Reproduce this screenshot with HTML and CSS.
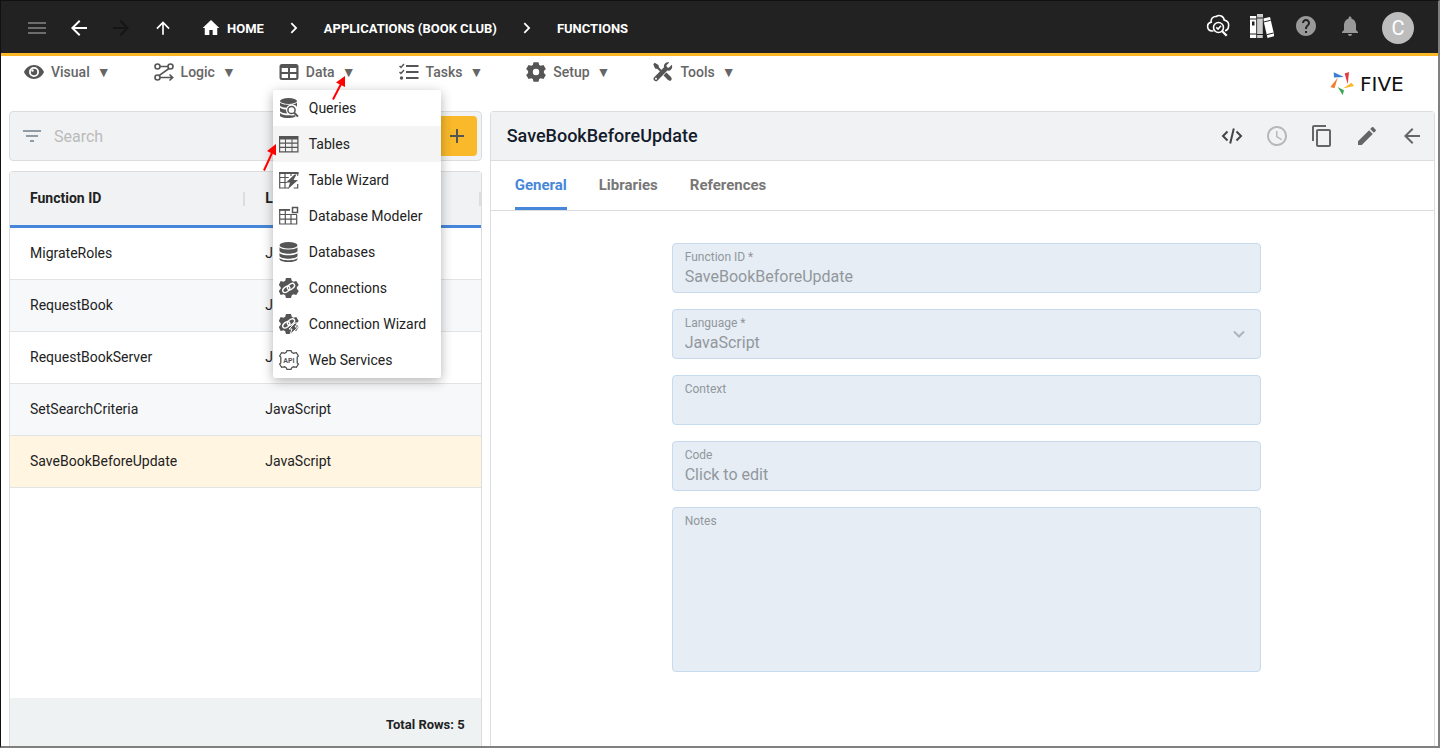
FILE: index.html
```html
<!DOCTYPE html>
<html lang="en">
<head>
    <meta charset="UTF-8">
    <meta name="viewport" content="width=device-width, initial-scale=1.0">
    <title>Five - Functions</title>
    <link rel="stylesheet" href="styles.css">
</head>
<body>
    <!-- Top Bar -->
    <header class="topbar">
        <div class="nav-buttons">
            <button type="button" class="icon-btn muted" aria-label="Menu">
                <svg width="24" height="24" viewBox="0 0 24 24"><path d="M3 6h18v2H3zM3 11h18v2H3zM3 16h18v2H3z"/></svg>
            </button>
            <button type="button" class="icon-btn" aria-label="Back">
                <svg width="24" height="24" viewBox="0 0 24 24"><path d="M20 11H7.830l5.590-5.590L12 4l-8 8 8 8 1.410-1.410L7.830 13H20z"/></svg>
            </button>
            <button type="button" class="icon-btn off" aria-label="Forward" disabled>
                <svg width="24" height="24" viewBox="0 0 24 24"><path d="M12 4l-1.410 1.410L16.170 11H4v2h12.170l-5.580 5.590L12 20l8-8z"/></svg>
            </button>
            <button type="button" class="icon-btn" aria-label="Up">
                <svg width="20" height="20" viewBox="0 0 24 24"><path d="M4 12l1.410 1.410L11 7.830V20h2V7.830l5.580 5.590L20 12l-8-8z"/></svg>
            </button>
        </div>
        <nav class="breadcrumb" aria-label="Breadcrumb">
            <a href="#" class="home">
                <svg width="20" height="20" viewBox="0 0 24 24"><path d="M10 20.500v-6h4v6h5.500v-8.500H22L12 2.500 2 12h2.500v8.500z"/></svg>
                HOME
            </a>
            <svg width="20" height="20" viewBox="0 0 24 24"><path d="M9.500 5.500L8 7l5 5-5 5 1.500 1.500L16 12z"/></svg>
            <a href="#">APPLICATIONS (BOOK CLUB)</a>
            <svg width="20" height="20" viewBox="0 0 24 24"><path d="M9.500 5.500L8 7l5 5-5 5 1.500 1.500L16 12z"/></svg>
            <a href="#">FUNCTIONS</a>
        </nav>
        <div class="topbar-tools">
            <button type="button" class="icon-btn" aria-label="Inspect cloud">
                <svg width="24" height="24" viewBox="0 0 24 24" fill="none" stroke="currentColor" stroke-width="1.600">
                    <path d="M7.500 17H6a4.500 4.500 0 0 1-.8-8.900 4.600 4.600 0 0 1 5-5.600 5 5 0 0 1 8 3.600A4.800 4.800 0 0 1 22.500 12a4.600 4.600 0 0 1-3.500 4.700"/>
                    <circle cx="12.500" cy="13.500" r="5"/>
                    <path d="M10.300 13.400l1.700 1.700 3-3.300"/><path d="M16.200 17.200l4.500 4.500" stroke-width="2.200"/>
                </svg>
            </button>
            <button type="button" class="icon-btn" aria-label="Library">
                <svg width="24" height="24" viewBox="0 0 24 24">
                    <path d="M0 2h6.500v22H0z"/><path d="M7 0h6v24H7z" fill="#ccc"/><path d="M13 4.500l7-1.500 4.500 19-7 2z"/>
                    <path d="M0 5h6.500M0 20h6.500M7 4h6M7 20.500h6M13.700 8l7-1.700M16.600 20.700l7-1.700" stroke="#222" stroke-width="1"/>
                    <path d="M2 7.500h2.500v4H2z" fill="#222"/><path d="M6.700 2v22M13.200 4v20" stroke="#222" stroke-width=".7"/>
                </svg>
            </button>
            <button type="button" class="icon-btn gray" aria-label="Help">
                <svg width="24" height="24" viewBox="0 0 24 24"><path d="M12 2C6.480 2 2 6.480 2 12s4.480 10 10 10 10-4.480 10-10S17.520 2 12 2zm1 17h-2v-2h2v2zm2.070-7.750l-.9.92C13.450 12.900 13 13.500 13 15h-2v-.5c0-1.100.45-2.100 1.170-2.830l1.240-1.260c.37-.36.59-.86.59-1.410 0-1.100-.9-2-2-2s-2 .9-2 2H8c0-2.210 1.790-4 4-4s4 1.790 4 4c0 .88-.36 1.680-.93 2.250z"/></svg>
            </button>
            <button type="button" class="icon-btn gray" aria-label="Notifications">
                <svg width="24" height="24" viewBox="0 0 24 24"><path d="M12 22c1.100 0 2-.9 2-2h-4c0 1.100.89 2 2 2zm6-6v-5c0-3.070-1.640-5.640-4.500-6.320V4c0-.83-.67-1.500-1.500-1.500s-1.500.67-1.500 1.500v.68C7.630 5.360 6 7.920 6 11v5l-2 2v1h16v-1l-2-2z"/></svg>
            </button>
            <button type="button" class="avatar" aria-label="Account">C</button>
        </div>
    </header>

    <!-- Main Menu -->
    <nav class="menubar" aria-label="Main menu">
        <ul class="menus">
            <li>
                <button type="button" class="menu-btn">
                    <svg width="20" height="20" viewBox="0 0 20 20"><path fill-rule="evenodd" d="M10 3C5.500 3 1.700 5.900 0 10c1.700 4.100 5.500 7 10 7s8.300-2.900 10-7c-1.700-4.100-5.500-7-10-7zm0 12a5 5 0 1 1 0-10 5 5 0 0 1 0 10z"/><circle cx="10" cy="10" r="3.200"/><circle cx="8.500" cy="8.500" r="1.200" fill="#fff"/></svg>
                    <span>Visual</span><span>▼</span>
                </button>
            </li>
            <li>
                <button type="button" class="menu-btn">
                    <svg width="20" height="20" viewBox="0 0 20 20" fill="none" stroke="currentColor" stroke-width="1.600"><circle cx="3.500" cy="4.500" r="2.500"/><circle cx="16.500" cy="4.500" r="2.500"/><circle cx="3.500" cy="15.500" r="2.500"/><path d="M6 4.500h8M15 6.500L5 13.700M6 15.500h12M15.500 12.500l3.200 3-3.200 3"/></svg>
                    <span>Logic</span><span>▼</span>
                </button>
            </li>
            <li>
                <button type="button" class="menu-btn" aria-expanded="true">
                    <svg width="20" height="20" viewBox="0 0 20 20"><path fill-rule="evenodd" d="M3 2h14a2.500 2.500 0 0 1 2.500 2.500v11A2.500 2.500 0 0 1 17 18H3a2.500 2.500 0 0 1-2.500-2.500v-11A2.500 2.500 0 0 1 3 2zM2.700 6v4H9V6zM11 6v4h6.300V6zM2.700 12v4H9v-4zM11 12v4h6.300v-4z"/></svg>
                    <span>Data</span><span>▼</span>
                </button>
                <svg class="pointer pointer-data" width="14" height="24" viewBox="0 0 14 24"><path d="M1 23.500L9 8" stroke="#f00" stroke-width="2"/><path d="M13 0v11L4 6.500z" fill="#f00"/></svg>
                <ul class="dropdown">
                    <li><button type="button">
                        <svg width="20" height="20" viewBox="0 0 20 20"><ellipse cx="9.500" cy="3" rx="8.500" ry="3"/><path d="M1 4.500c2 3 15 3 17 0v4.200c-2.500-3-8.500-3-10.500 1-3 0-5.500-.7-6.500-2zM1 9.500c1.500 1.500 4 2 6 2 0 2 .6 3 1.500 4-4 0-7-1-7.500-2.200zM1 15c2.500 2.300 6 2.300 10 2.200 2 .6 3 .3 4.500-.2l1.200 1.200C13 21 3 20.500 1 18z"/><circle cx="12.500" cy="12" r="3.600" fill="none" stroke="currentColor" stroke-width="1.500"/><path d="M15.200 14.800l3.800 3.800" stroke="currentColor" stroke-width="2"/></svg>
                        Queries</button></li>
                    <li><button type="button" class="hovered">
                        <svg width="20" height="20" viewBox="0 0 20 20"><path fill-rule="evenodd" d="M0 2h19.500v16.500H0zM1.200 5.500v3h4.800v-3zM7 5.500v3h5.500v-3zM13.500 5.500v3h4.800v-3zM1.200 9.700v3h4.800v-3zM7 9.700v3h5.500v-3zM13.500 9.700v3h4.800v-3zM1.200 14v3.300h4.800V14zM7 14v3.300h5.500V14zM13.500 14v3.300h4.800V14z"/></svg>
                        Tables</button>
                        <svg class="pointer pointer-tables" width="14" height="27" viewBox="0 0 14 27"><path d="M1 26.500L9 9" stroke="#f00" stroke-width="2"/><path d="M13 0v11.500L4 7z" fill="#f00"/></svg>
                    </li>
                    <li><button type="button">
                        <svg width="20" height="20" viewBox="0 0 20 20"><path d="M.7 2.700h18v3M.7 2v16h9M.7 7.500h9M.7 12.500h7M6 3v15M12 3v3M18.700 14v4h-4" fill="none" stroke="currentColor" stroke-width="1.200"/><path d="M0 2h19.500v2H0zM15.500 4.500l-8.500 8h4L9 19l10-9h-4.500l3-5.500z"/></svg>
                        Table Wizard</button></li>
                    <li><button type="button">
                        <svg width="20" height="20" viewBox="0 0 20 20"><path d="M11 3.700H.7V18h17V9M.7 8.500H18M.7 13.200h17M6.300 3v15M12 8v10" fill="none" stroke="currentColor" stroke-width="1.200"/><path d="M0 3h11v1.800H0z"/><path d="M13.500 1.500h5v5h-5z" fill="none" stroke="currentColor" stroke-width="1.500"/></svg>
                        Database Modeler</button></li>
                    <li><button type="button">
                        <svg width="20" height="20" viewBox="0 0 20 20"><ellipse cx="9.500" cy="3.200" rx="9" ry="3.200"/><path d="M.5 5.200c2 3 16 3 18 0v4c-2 3.300-16 3.300-18 0zM.5 11c2 3 16 3 18 0v3.200c-2 3.300-16 3.300-18 0zM.5 16c2 3 16 3 18 0v1.300c-1 3.800-17 3.800-18 0z"/></svg>
                        Databases</button></li>
                    <li><button type="button">
                        <svg width="20" height="20" viewBox="0 0 20 20"><path d="M7 0h5l.8 2.800 1.700.9L17.300 3l2.400 4-1.900 2.200v1.600l1.900 2.200-2.400 4-2.800-.7-1.700.9L12 20H7l-.8-2.800-1.700-.9-2.800.7L-.3 13l2-2.200V9.200L-.3 7l2-4 2.800.7 1.700-.9z"/><g fill="none" stroke="#fff" stroke-width="1.400"><ellipse cx="7.300" cy="11.300" rx="4" ry="2.500" transform="rotate(-38 7.300 11.300)"/><ellipse cx="12" cy="8.600" rx="4" ry="2.500" transform="rotate(-38 12 8.600)"/></g></svg>
                        Connections</button></li>
                    <li><button type="button">
                        <svg width="20" height="20" viewBox="0 0 20 20"><path d="M7 0h5l.8 2.800 1.700.9L17.300 3l2.400 4-1.900 2.200v1.600l1.900 2.200-2.400 4-2.800-.7-1.700.9L12 20H7l-.8-2.800-1.700-.9-2.800.7L-.3 13l2-2.200V9.200L-.3 7l2-4 2.800.7 1.700-.9z"/><g fill="none" stroke="#fff" stroke-width="1.400"><ellipse cx="7.300" cy="10.800" rx="4" ry="2.500" transform="rotate(-38 7.300 10.800)"/><ellipse cx="12" cy="8" rx="4" ry="2.500" transform="rotate(-38 12 8)"/></g><path d="M16 9l-6 6h3l-2 5.500 8.500-7.500h-3.500l2.500-4z" stroke="#fff" stroke-width="1"/></svg>
                        Connection Wizard</button></li>
                    <li><button type="button">
                        <svg width="20" height="20" viewBox="0 0 20 20"><path d="M1.800 6.800L.6 6l2-3.300 2.900.5 1.700-1L8 .7h4l.8 1.500 1.700 1 2.900-.5 2 3.300-1.200.8M1.800 13.200L.6 14l2 3.300 2.900-.5 1.700 1L8 19.300h4l.8-1.500 1.700-1 2.900.5 2-3.300-1.200-.8M1.800 6.800v6.400M18.200 6.800v6.400" fill="none" stroke="currentColor" stroke-width="1.300"/><text x="10" y="12.500" text-anchor="middle" class="api-text">API</text></svg>
                        Web Services</button></li>
                </ul>
            </li>
            <li>
                <button type="button" class="menu-btn">
                    <svg width="20" height="20" viewBox="0 0 20 20"><path d="M7 3h12.500v2H7zM7 9h12.500v2H7zM7 15h12.500v2H7z"/><circle cx="2.500" cy="16" r="1.700"/><path d="M.5 4l1.500 1.500L5 2M.5 10L2 11.500 5 8" fill="none" stroke="currentColor" stroke-width="1.500"/></svg>
                    <span>Tasks</span><span>▼</span>
                </button>
            </li>
            <li>
                <button type="button" class="menu-btn">
                    <svg width="20" height="20" viewBox="0 0 20 20"><path fill-rule="evenodd" d="M7.500.2h5l.7 2.700 1.600.9 2.700-.8 2.300 4-1.900 2v2l1.900 2-2.300 4-2.700-.8-1.600.9-.7 2.700h-5l-.7-2.700-1.600-.9-2.700.8-2.300-4 1.900-2V9L.2 7l2.300-4 2.700.8 1.600-.9zM10 6.800a3.200 3.200 0 1 0 0 6.400 3.200 3.200 0 0 0 0-6.400z"/></svg>
                    <span>Setup</span><span>▼</span>
                </button>
            </li>
            <li>
                <button type="button" class="menu-btn">
                    <svg width="20" height="20" viewBox="0 0 20 20"><path d="M1.700.7L5.500 3l.5 2.500 4 4-1.500 1.500-4-4L2 6.500.3 2.200zM12.800 11.500l5.700 4.300a2 2 0 0 1-2.700 2.700l-4.600-5.300z"/><path d="M18.800 2.800l-3 2.900-1.900-.4-.5-2L16.300.5c-3-1.200-6.200 1.600-5.300 4.800L1.200 15.200a2.300 2.300 0 0 0 3.400 3.300L14.400 8.600c3.200.8 5.800-2.300 4.400-5.800z"/><path d="M12 12l4.500 4.500" stroke="currentColor" stroke-width="4"/><circle cx="3" cy="16.800" r="1" fill="#fff"/></svg>
                    <span>Tools</span><span>▼</span>
                </button>
            </li>
        </ul>
        <a href="#" class="logo">
            <svg width="25" height="25" viewBox="0 0 25 25">
                <path d="M3.700 1.300L14 6 4 6.500z" fill="#3b7fd4"/>
                <path d="M14.700 2.500L19 1l-1.300 12.300z" fill="#e5393f"/>
                <path d="M13 17.500l8.500-5.800L24 15z" fill="#fbb726"/>
                <path d="M7.700 16l6.300 3.300-1.300 5z" fill="#3fa75a"/>
                <path d="M7.700 6.700L.3 16l4.200 1.300z" fill="#f47c30"/>
            </svg>
            <span>FIVE</span>
        </a>
    </nav>

    <main class="content">
        <!-- Function List -->
        <section class="list">
            <div class="search-bar">
                <svg width="24" height="24" viewBox="0 0 24 24"><path d="M3 6h18v2H3zM6 11h12v2H6zM10 16h4v2h-4z"/></svg>
                <input type="search" placeholder="Search" aria-label="Search">
                <button type="button" class="add-btn" aria-label="Add function">
                    <svg width="24" height="24" viewBox="0 0 24 24"><path d="M19 13h-6v6h-2v-6H5v-2h6V5h2v6h6z"/></svg>
                </button>
            </div>
            <div class="table-card">
                <table>
                    <thead>
                        <tr><th scope="col">Function ID</th><th scope="col">Language</th></tr>
                    </thead>
                    <tbody>
                        <tr><td>MigrateRoles</td><td>JavaScript</td></tr>
                        <tr><td>RequestBook</td><td>JavaScript</td></tr>
                        <tr><td>RequestBookServer</td><td>JavaScript</td></tr>
                        <tr><td>SetSearchCriteria</td><td>JavaScript</td></tr>
                        <tr class="selected"><td>SaveBookBeforeUpdate</td><td>JavaScript</td></tr>
                    </tbody>
                </table>
                <div class="table-footer">Total Rows: 5</div>
            </div>
        </section>

        <!-- Function Details -->
        <section class="details">
            <div class="details-header">
                <h1>SaveBookBeforeUpdate</h1>
                <div class="details-tools">
                    <button type="button" class="icon-btn dark" aria-label="Code">
                        <svg width="24" height="24" viewBox="0 0 24 24" fill="none" stroke="currentColor" stroke-width="2"><path d="M7.500 7.500L3 12l4.500 4.500M16.500 7.500L21 12l-4.500 4.500M13.800 4.500l-3.600 15"/></svg>
                    </button>
                    <button type="button" class="icon-btn faded" aria-label="History" disabled>
                        <svg width="24" height="24" viewBox="0 0 24 24"><path d="M11.990 2C6.470 2 2 6.480 2 12s4.470 10 9.990 10C17.520 22 22 17.520 22 12S17.520 2 11.990 2zM12 20c-4.420 0-8-3.580-8-8s3.580-8 8-8 8 3.580 8 8-3.580 8-8 8zm.5-13H11v6l5.250 3.150.75-1.230-4.500-2.670z"/></svg>
                    </button>
                    <button type="button" class="icon-btn" aria-label="Copy">
                        <svg width="24" height="24" viewBox="0 0 24 24"><path d="M16 1H4c-1.100 0-2 .9-2 2v14h2V3h12V1zm3 4H8c-1.100 0-2 .9-2 2v14c0 1.100.9 2 2 2h11c1.100 0 2-.9 2-2V7c0-1.100-.9-2-2-2zm0 16H8V7h11v14z"/></svg>
                    </button>
                    <button type="button" class="icon-btn" aria-label="Edit">
                        <svg width="24" height="24" viewBox="0 0 24 24"><path d="M3 17.250V21h3.750L17.810 9.940l-3.750-3.750L3 17.250zM20.710 7.040c.39-.39.39-1.020 0-1.410l-2.340-2.340c-.39-.39-1.020-.39-1.410 0l-1.830 1.830 3.750 3.750 1.830-1.830z"/></svg>
                    </button>
                    <button type="button" class="icon-btn" aria-label="Close">
                        <svg width="24" height="24" viewBox="0 0 24 24"><path d="M20 11H7.830l5.590-5.590L12 4l-8 8 8 8 1.410-1.410L7.830 13H20z"/></svg>
                    </button>
                </div>
            </div>
            <div class="tabs" role="tablist">
                <button type="button" role="tab" class="active" aria-selected="true">General</button>
                <button type="button" role="tab">Libraries</button>
                <button type="button" role="tab">References</button>
            </div>
            <form class="form">
                <div class="field">
                    <label for="function-id">Function ID *</label>
                    <input type="text" id="function-id" value="SaveBookBeforeUpdate" disabled>
                </div>
                <div class="field">
                    <label for="language">Language *</label>
                    <select id="language" disabled><option>JavaScript</option></select>
                    <svg class="caret" width="24" height="24" viewBox="0 0 24 24"><path d="M7 9.500l5 5 5-5" fill="none" stroke="currentColor" stroke-width="2"/></svg>
                </div>
                <div class="field">
                    <label for="context">Context</label>
                    <input type="text" id="context" disabled>
                </div>
                <div class="field">
                    <label for="code">Code</label>
                    <input type="text" id="code" value="Click to edit" disabled>
                </div>
                <div class="field">
                    <label for="notes">Notes</label>
                    <textarea id="notes" rows="5" disabled></textarea>
                </div>
            </form>
        </section>
    </main>
</body>
</html>
```
FILE: styles.css
```css
/* Global Styles */
* {
    box-sizing: border-box;
}

body {
    display: flex;
    flex-direction: column;
    min-height: 100vh;
    margin: 0;
    border: 1px solid #111;
    border-right: 2px solid #808080;
    border-bottom: 2px solid #808080;
    font-family: Roboto, "Liberation Sans", sans-serif;
    font-size: 14px;
    color: #222;
    background: #fff;
}

button,
input,
select,
textarea {
    font: inherit;
    color: inherit;
    border: none;
    background: none;
    padding: 0;
    margin: 0;
}

button {
    cursor: pointer;
}

a {
    color: inherit;
    text-decoration: none;
}

ul {
    list-style: none;
    margin: 0;
    padding: 0;
}

svg {
    display: block;
    flex: none;
    fill: currentColor;
}

svg[fill="none"] {
    fill: none;
}

/* Top Bar */
.topbar {
    display: flex;
    align-items: center;
    height: 55px;
    padding: 2px 24px 0;
    background: #222;
    border-bottom: 3px solid #fbb726;
    color: #fff;
}

.nav-buttons {
    display: flex;
    gap: 18px;
    margin-right: 26px;
}

.icon-btn {
    display: flex;
    align-items: center;
    justify-content: center;
    width: 24px;
    height: 24px;
}

.muted {
    color: #6c6c6c;
}

.off {
    color: #151515;
}

.gray {
    color: #999;
}

.breadcrumb {
    display: flex;
    align-items: center;
    gap: 20px;
    font-size: 13px;
    font-weight: 700;
}

.home {
    display: flex;
    align-items: center;
    gap: 6px;
}

.topbar-tools {
    display: flex;
    align-items: center;
    gap: 20px;
    margin-left: auto;
}

.topbar-tools .icon-btn {
    margin-bottom: 4px;
}

.avatar {
    width: 32px;
    height: 32px;
    border-radius: 50%;
    background: #bdbdbd;
    color: #fff;
    font-size: 20px;
}

/* Main Menu */
.menubar {
    display: flex;
    justify-content: space-between;
    align-items: center;
    height: 55px;
    padding: 0 20px 0 15px;
}

.menus {
    display: flex;
    align-self: flex-start;
    gap: 27px;
}

.menus > li {
    position: relative;
}

.menu-btn {
    display: flex;
    align-items: center;
    gap: 7px;
    height: 32px;
    padding: 0 8px;
    font-weight: 500;
    color: #666;
}

.menu-btn svg {
    color: #555;
}

.dropdown {
    position: absolute;
    top: 34px;
    left: 2px;
    z-index: 1;
    min-width: 168px;
    background: #fff;
    border-radius: 2px;
    box-shadow: 0 3px 12px rgba(0, 0, 0, 0.3);
}

.dropdown li {
    position: relative;
}

.dropdown button {
    display: flex;
    align-items: center;
    gap: 10px;
    width: 100%;
    height: 36px;
    padding: 0 6px;
    white-space: nowrap;
}

.dropdown button svg {
    color: #555;
}

.dropdown .hovered {
    background: #f4f4f4;
}

.api-text {
    font-size: 7px;
    font-weight: 700;
}

.pointer {
    position: absolute;
    z-index: 2;
}

.pointer-data {
    top: 20px;
    left: 61px;
}

.pointer-tables {
    top: 18px;
    left: -10px;
}

.logo {
    display: flex;
    align-items: center;
    gap: 5px;
    font-family: "DejaVu Sans", sans-serif;
    font-size: 20px;
    line-height: 24px;
    color: #111;
}

.logo span {
    min-width: 58px;
}

/* Function List */
.content {
    flex: 1;
    display: grid;
    grid-template-columns: 1fr 2fr;
    gap: 8px;
    padding: 0 3px 0 8px;
}

.list {
    display: flex;
    flex-direction: column;
    gap: 10px;
}

.search-bar {
    display: flex;
    align-items: center;
    gap: 10px;
    height: 50px;
    padding: 0 4px 0 10px;
    background: #f1f2f4;
    border: 1px solid #dcdddf;
    border-radius: 4px;
    color: #919ba6;
}

.search-bar input {
    flex: 1;
    min-width: 0;
    font-size: 16px;
}

.search-bar input::placeholder {
    color: #bbb;
}

.add-btn {
    display: flex;
    align-items: center;
    justify-content: center;
    width: 40px;
    height: 40px;
    border-radius: 4px;
    background: #f9b92b;
    color: #555;
}

.table-card {
    flex: 1;
    display: flex;
    flex-direction: column;
    border: 1px solid #dcdddf;
    border-bottom: none;
    border-radius: 4px 4px 0 0;
}

table {
    width: 100%;
    table-layout: fixed;
    border-collapse: separate;
    border-spacing: 0;
}

th,
td {
    padding: 0 20px 2px;
    text-align: left;
}

th {
    height: 56px;
    background: linear-gradient(#dcdddf, #dcdddf) right 20px / 2px 14px no-repeat #f1f2f4;
    border-bottom: 3px solid #4687d9;
    font-weight: 700;
}

td {
    height: 52px;
    border-bottom: 1px solid #e2e3e5;
}

tbody tr:nth-child(even) {
    background: #f7f8fa;
}

tbody .selected {
    background: #fff5e1;
}

.table-footer {
    margin-top: auto;
    height: 48px;
    padding: 19px 16px 0;
    background: #eef2f3;
    font-size: 13px;
    font-weight: 700;
    line-height: 16px;
    text-align: right;
}

/* Function Details */
.details {
    border: 1px solid #dcdddf;
    border-bottom: none;
    border-radius: 4px 4px 0 0;
}

.details-header {
    display: flex;
    align-items: center;
    justify-content: space-between;
    height: 49px;
    padding: 0 10px 0 16px;
    background: #f1f2f4;
    border-bottom: 1px solid #dcdddf;
    color: #666;
}

h1 {
    margin: 0 0 2px;
    font-size: 18px;
    font-weight: 500;
    color: #141c2c;
}

.details-tools {
    display: flex;
    gap: 21px;
}

.dark {
    color: #444;
}

.faded {
    color: #b5b7b9;
}

.tabs {
    display: flex;
    gap: 32px;
    height: 50px;
    padding: 0 24px;
    border-bottom: 1px solid #dcdddf;
}

.tabs button {
    border-top: 1px solid transparent;
    border-bottom: 3px solid transparent;
    font-size: 15px;
    font-weight: 700;
    color: #777;
}

.tabs .active {
    border-bottom-color: #4687d9;
    color: #4687d9;
}

.form {
    display: flex;
    flex-direction: column;
    align-items: center;
    gap: 16px;
    padding: 32px 0 32px 8px;
}

.field {
    position: relative;
    display: flex;
    flex-direction: column;
    gap: 1px;
    width: 63%;
    padding: 6px 12px 3px;
    background: #e6edf5;
    border: 1px solid #c8dbee;
    border-radius: 4px;
    color: #92979c;
}

.field label {
    font-size: 12px;
    line-height: 14px;
}

.field input,
.field select,
.field textarea {
    width: 100%;
    height: 24px;
    font-size: 16px;
    line-height: 24px;
    appearance: none;
    resize: none;
    opacity: 1;
}

.field textarea {
    height: auto;
    min-height: 139px;
}

.caret {
    position: absolute;
    top: 12px;
    right: 9px;
    color: #adb4ba;
}
```
